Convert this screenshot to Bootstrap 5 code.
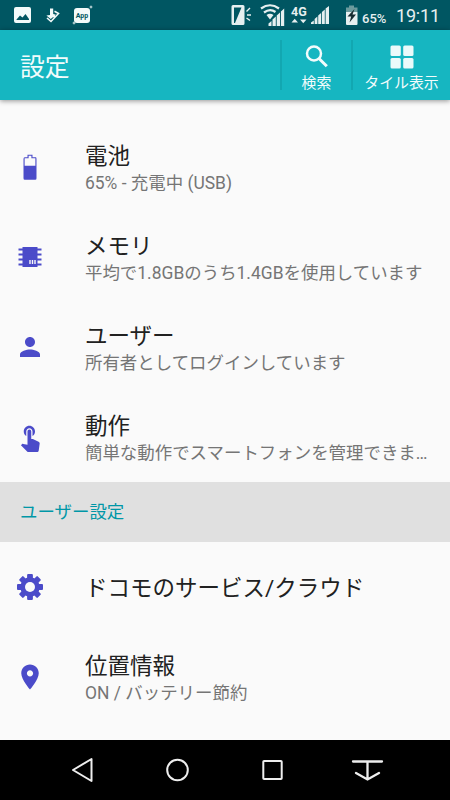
<!DOCTYPE html>
<html lang="ja">
<head>
<meta charset="utf-8">
<meta name="viewport" content="width=device-width, initial-scale=1">
<title>設定</title>
<link href="https://cdn.jsdelivr.net/npm/bootstrap@5.3.0/dist/css/bootstrap.min.css" rel="stylesheet">
<style>
body{font-family:Roboto,"Noto Sans CJK JP",sans-serif;background:#fafafa;color:#212121}
.screen{width:450px;height:800px}
svg{display:block;flex:none}
.status{height:30px;background:#005662;color:#e6eff0;padding:0 10px 0 14px}
.sys-icon{margin-right:4px}
.pct{font-size:13px;line-height:16px;padding-top:11px;width:34px;font-weight:500;white-space:nowrap}
.clock{font-size:18px;line-height:30px;letter-spacing:-.2px;padding-top:1px;width:44px;white-space:nowrap}
.appbar{height:70px;background:#16b6c1;color:#f2fcfc;box-shadow:0 1px 5px rgba(0,0,0,.42);z-index:2}
.appbar h1{font-size:24.8px;line-height:36px;padding:5px 0 0 20px}
.action{height:50px;border-left:2px solid #12a7b1;font-size:14.9px;line-height:20px;color:inherit;background:none;white-space:nowrap}
.action span{height:17px}
.search-action{width:71px}
.tile-action{width:99px}
.settings{padding-top:22px}
.entry{height:90px;padding:0 20px 0 15px}
.entry-icon{width:30px;margin-right:40px;color:#4b4bc9}
.entry-text{padding-top:1px}
.entry-title{font-size:22.5px;line-height:30px}
.entry-sub{font-size:17.46px;line-height:24px;color:#757575}
.section-head{height:60px;background:#e0e0e0;color:#0097a7;font-size:17.46px;padding:1px 0 0 20px}
.navkeys{height:60px;background:#000;color:#eee;padding:0 35px}
.navkeys svg{width:95px}
</style>
</head>
<body>
<div class="screen d-flex flex-column overflow-hidden">
  <div class="status d-flex flex-shrink-0">
    <svg width="82" height="30" viewBox="14 0 82 30" fill="#f3fafa">
      <path fill-rule="evenodd" d="M16 7h13q2 0 2 2v12q0 2-2 2H16q-2 0-2-2V9q0-2 2-2zm.5 13H29v-1l-3.500-5-3 3.500-2.500-2-3.500 4z"/>
      <path d="M50 8.500h3.200v5.500l2.800.8-5.300 4.200-4.300-3.500 3.600-.5z"/>
      <path fill="none" stroke="#f3fafa" stroke-width="1.600" d="M47 18l4 3.500 7.500-8-4-2.300"/>
      <circle cx="54" cy="16.300" r="1.200"/>
      <rect x="74" y="8" width="16" height="15" rx="3"/>
      <path d="m91 5 .5 1.500L93 7l-1.500.5L91 9l-.5-1.500L89 7l1.500-.5zM74 21l.5 1.500 1.500.5-1.500.5-.5 1.500-.5-1.500L72 23l1.500-.5z"/>
      <text x="82" y="17.500" font-size="7" font-weight="700" text-anchor="middle" fill="#005662">App</text>
    </svg>
    <svg class="ms-auto sys-icon" width="127" height="30" viewBox="231 0 127 30" fill="#e6eff0">
      <path fill-rule="evenodd" d="M233 5h10q1.500 0 1.500 1.500v17q0 1.500-1.500 1.500h-10q-1.500 0-1.500-1.500v-17Q231.500 5 233 5zm1 2.500v15.500h1L241.500 7.500z"/>
      <path d="M246.500 11.500l3.500-3.500M247 15h4M246.500 18l3.500 2.500" stroke="#e6eff0" stroke-width="1.400"/>
      <path fill="none" stroke="#e6eff0" stroke-width="2.200" d="M261 8.500q9-6.500 18 0M264 12.500q6-4.500 11.500-.5"/>
      <path d="M266.500 15q3.500-2.500 7 0l-3.500 4.500zM268.500 26v-2.500l3-2.500v5zM272.500 19.500l3.300-3V26h-3.300zM276.700 15.500l3.300-3V26h-3.300zM280.900 11.500l3.300-3V26h-3.300z"/>
      <text x="291" y="16" font-size="12.500" font-weight="700">4G</text>
      <path d="M291.500 22.500l3.200-3.700 3.300 3.700zM300 19.500h6.500l-3.250 3.700z"/>
      <path d="M311 24v-1.500l2.800-2V24zM314.600 24v-5l2.800-2.500V24zM318.200 24v-8.500l2.900-2.500v11zM321.900 24V12l2.900-2.500V24zM325.600 24V8.500L329 6v18z"/>
      <path fill="#6b9a9d" d="M346 12V7.500h3v-2h5v2h3.500V12z"/>
      <path d="M346 12h11.500v12q0 1-1 1H347q-1 0-1-1z"/>
      <path fill="#172b30" d="M354.500 9l-7 7.500h3.700l-1.700 6 6.500-8h-3.500z"/>
    </svg>
    <div class="pct">65%</div>
    <div class="clock">19:11</div>
  </div>
  <header class="appbar d-flex align-items-center flex-shrink-0 position-relative">
    <h1 class="fw-normal mb-0 me-auto">設定</h1>
    <button class="action search-action border-top-0 border-end-0 border-bottom-0 p-0 d-flex flex-column align-items-center justify-content-between">
      <svg width="26" height="30" viewBox="0 0 26 30" fill="none" stroke="currentColor" stroke-width="2.500"><circle cx="10" cy="13.500" r="7"/><path d="M15 18.500l7.800 7.800" stroke-width="3"/></svg>
      <span>検索</span>
    </button>
    <button class="action tile-action border-top-0 border-end-0 border-bottom-0 p-0 d-flex flex-column align-items-center justify-content-between">
      <svg width="24" height="29" viewBox="0 0 24 29" fill="#eafafa"><rect x=".5" y="5.500" width="10.300" height="10.500" rx="1.500"/><rect x="13.200" y="5.500" width="10.300" height="10.500" rx="1.500"/><rect x=".5" y="18" width="10.300" height="10.500" rx="1.500"/><rect x="13.200" y="18" width="10.300" height="10.500" rx="1.500"/></svg>
      <span>タイル表示</span>
    </button>
  </header>
  <main class="settings flex-grow-1 overflow-hidden">
    <div class="entry d-flex align-items-center">
      <svg class="entry-icon" height="30" viewBox="0 0 24 24" fill="currentColor"><path fill-rule="evenodd" d="M10 2h4v2h2.700Q17.200 4 17.200 5.300v15.400Q17.200 22 16.200 22H7.800Q6.800 22 6.800 20.700V5.300Q6.800 4 7.800 4H10zm.9.800v2H7.700V10.700h8.600V4.800h-3.200v-2z" transform="translate(0 .2)"/></svg>
      <div class="entry-text text-truncate"><div class="entry-title">電池</div><div class="entry-sub text-truncate">65% - 充電中 (USB)</div></div>
    </div>
    <div class="entry d-flex align-items-center">
      <svg class="entry-icon" height="30" viewBox="0 0 30 30" fill="currentColor"><path d="M7.500 5h15v20h-15z"/><path d="M3.500 7.500h23M3.500 12.500h23M3.500 17.500h23M3.500 22.500h23" stroke="currentColor" stroke-width="1.800"/><path d="M15 18v4M17.500 18v4M20 18v4" stroke="#fafafa" stroke-width="1.400"/></svg>
      <div class="entry-text text-truncate"><div class="entry-title">メモリ</div><div class="entry-sub text-truncate">平均で1.8GBのうち1.4GBを使用しています</div></div>
    </div>
    <div class="entry d-flex align-items-center">
      <svg class="entry-icon" height="30" viewBox="0 0 24 24" fill="currentColor"><path d="M12 12c2.210 0 4-1.790 4-4s-1.790-4-4-4-4 1.790-4 4 1.790 4 4 4zm0 2c-2.670 0-8 1.340-8 4v2h16v-2c0-2.660-5.330-4-8-4z"/></svg>
      <div class="entry-text text-truncate"><div class="entry-title">ユーザー</div><div class="entry-sub text-truncate">所有者としてログインしています</div></div>
    </div>
    <div class="entry d-flex align-items-center">
      <svg class="entry-icon" height="30" viewBox="0 0 24 24" fill="currentColor"><path d="M9 11.240V7.500C9 6.120 10.120 5 11.500 5S14 6.120 14 7.500v3.740c1.210-.81 2-2.180 2-3.740C16 5.010 13.990 3 11.500 3S7 5.010 7 7.500c0 1.560.79 2.930 2 3.740zm9.840 4.630l-4.540-2.260c-.17-.07-.35-.11-.54-.11H13v-6c0-.83-.67-1.500-1.500-1.500S10 6.670 10 7.500v10.740l-3.430-.72c-.08-.01-.15-.03-.24-.03-.31 0-.59.13-.79.33l-.79.800 4.940 4.940c.27.27.65.440 1.060.440h6.790c.75 0 1.330-.55 1.440-1.280l.75-5.270c.01-.07.020-.14.020-.2 0-.62-.38-1.160-.91-1.380z"/></svg>
      <div class="entry-text text-truncate"><div class="entry-title">動作</div><div class="entry-sub text-truncate">簡単な動作でスマートフォンを管理できま…</div></div>
    </div>
    <div class="section-head d-flex align-items-center">ユーザー設定</div>
    <div class="entry d-flex align-items-center">
      <svg class="entry-icon" height="30" viewBox="-15 -15 30 30" fill="currentColor"><g id="teeth"><rect x="-2.900" y="-13" width="5.800" height="26" rx="1"/><rect x="-13" y="-2.900" width="26" height="5.800" rx="1"/></g><use href="#teeth" transform="rotate(45)"/><circle r="9.700"/><circle r="5" fill="#fafafa"/></svg>
      <div class="entry-text entry-title text-truncate">ドコモのサービス/クラウド</div>
    </div>
    <div class="entry d-flex align-items-center">
      <svg class="entry-icon" height="30" viewBox="0 0 24 24" fill="currentColor"><path d="M12 2C8.130 2 5 5.130 5 9c0 5.250 7 13 7 13s7-7.750 7-13c0-3.870-3.130-7-7-7zm0 9.500c-1.380 0-2.500-1.120-2.500-2.500s1.120-2.500 2.500-2.500 2.500 1.120 2.500 2.500-1.120 2.500-2.500 2.500z"/></svg>
      <div class="entry-text text-truncate"><div class="entry-title">位置情報</div><div class="entry-sub text-truncate">ON / バッテリー節約</div></div>
    </div>
  </main>
  <nav class="navkeys d-flex flex-shrink-0">
    <svg height="60" viewBox="35 740 95 60" fill="none" stroke="currentColor" stroke-width="2" stroke-linejoin="round"><path d="M91.500 759v22L73 770z"/></svg>
    <svg height="60" viewBox="130 740 95 60" fill="none" stroke="currentColor" stroke-width="2"><circle cx="177.500" cy="770" r="10.300"/></svg>
    <svg height="60" viewBox="225 740 95 60" fill="none" stroke="currentColor" stroke-width="2"><rect x="263.300" y="761" width="18.400" height="18" rx=".8"/></svg>
    <svg height="60" viewBox="320 740 95 60" fill="none" stroke="currentColor" stroke-width="2.300" stroke-linecap="round"><path d="M353 761.500h29M367.500 762v17M356 773l11.500 6.500L379 773"/></svg>
  </nav>
</div>
<script src="https://cdn.jsdelivr.net/npm/bootstrap@5.3.0/dist/js/bootstrap.bundle.min.js"></script>
</body>
</html>
